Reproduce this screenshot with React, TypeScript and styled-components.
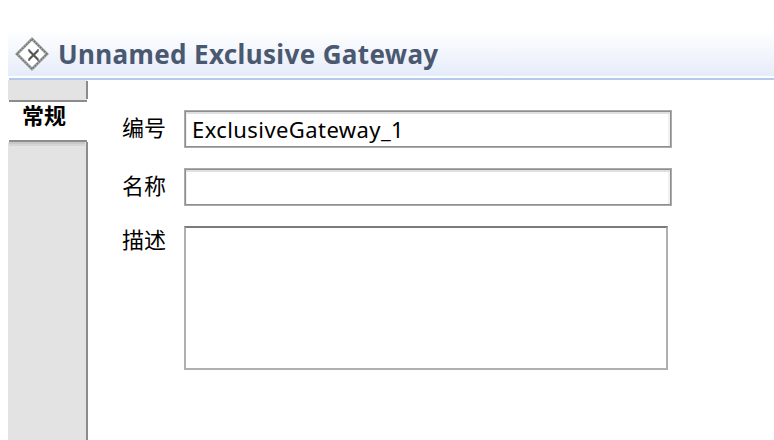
import React from "react";
import styled, { createGlobalStyle } from "styled-components";

const GlobalStyle = createGlobalStyle`
  * { box-sizing: border-box; }
  body { margin: 0; background: #fff; overflow: hidden; }
`;

const Page = styled.div`
  height: 440px;
  padding: 30px 0 0 8px;
  display: flex;
  flex-direction: column;
  font-family: "Noto Sans", "Noto Sans CJK SC", sans-serif;
  color: #000;
`;

const Header = styled.header`
  height: 46px;
  flex: none;
  display: flex;
  align-items: center;
  padding: 2px 0 0 7px;
  background: linear-gradient(#ffffff, #e5ecfa);
`;

const Title = styled.h1`
  margin: 0 0 0 8px;
  font-size: 26px;
  line-height: 36px;
  font-weight: 700;
  letter-spacing: 0.36px;
  white-space: nowrap;
  color: #4a5870;
`;

const Rule = styled.div`
  height: 2px;
  flex: none;
  margin: 2px 0 0 1px;
  background: #b4c9ed;
`;

const Body = styled.div`
  flex: 1;
  display: flex;
`;

const Sidebar = styled.nav`
  width: 80px;
  display: flex;
  flex-direction: column;
`;

const TabGap = styled.div`
  height: 20px;
  background: linear-gradient(#8c8c8c, #8c8c8c) 78px 1px / 2px 18px no-repeat,
    linear-gradient(90deg, #e3e3e3 79px, #fff 79px);
`;

const Tab = styled.div`
  height: 42px;
  margin: 0 1px;
  border: solid #8c8c8c;
  border-width: 2px 0;
  padding-left: 13px;
  font-size: 22px;
  line-height: 26px;
  font-weight: 700;
`;

const TabRest = styled.div`
  flex: 1;
  border-right: 2px solid #8c8c8c;
  background: linear-gradient(#c8c8c8 2px, #d5d5d5 2px 4px, #e3e3e3 4px) 1px 0 / 76px 6px no-repeat, #e3e3e3;
`;

const Form = styled.form`
  padding: 30px 0 0 34px;
  display: grid;
  grid-template-columns: 62px 488px;
  grid-template-rows: 38px 38px 144px;
  row-gap: 20px;
`;

const Label = styled.label<{ $top: number }>`
  margin-top: ${(p) => p.$top}px;
  font-size: 22px;
  line-height: 32px;
  white-space: nowrap;
`;

const Input = styled.input`
  width: 488px;
  height: 38px;
  margin: 0;
  padding: 0 7px;
  border: 1px solid #ababab;
  border-radius: 0;
  outline: none;
  background: #fff;
  box-shadow: inset 0 0 0 1px #8e8e8e, inset 0 3px 0 #e0e0e0, inset 2px 0 0 #f1f1f1, inset -3px 0 0 #f1f1f1;
  font: 22px/32px "Noto Sans", sans-serif;
  letter-spacing: 0.42px;
  color: #000;
`;

const TextArea = styled.textarea`
  width: 484px;
  height: 144px;
  margin: 0;
  padding: 6px;
  border: 2px solid #b0b0b0;
  border-top-color: #7c7a7c;
  border-radius: 0;
  outline: none;
  resize: none;
  background: #fff;
  font: 22px "Noto Sans", sans-serif;
`;

const GatewayIcon = () => (
  <svg width="35" height="36" viewBox="0 0 35 36" fill="none">
    <path d="M17 3 32 18 17 33 2 18Z" fill="#fff" stroke="#a6a6a6" strokeWidth="2.8" />
    <path d="M17 3 32 18 17 33 2 18Z" stroke="#747474" strokeWidth="1.8" strokeDasharray="1.6 1.23" />
    <path d="m14 14.5 9 9M23 14.5l-9 9" stroke="#555" strokeWidth="2.2" />
    <path d="M13 14h2m7 0h2M13 24h2m7 0h2" stroke="#666" strokeWidth="1.6" />
  </svg>
);

export default function App() {
  return (
    <>
      <GlobalStyle />
      <Page>
        <Header>
          <GatewayIcon />
          <Title>Unnamed Exclusive Gateway</Title>
        </Header>
        <Rule />
        <Body>
          <Sidebar>
            <TabGap />
            <Tab>常规</Tab>
            <TabRest />
          </Sidebar>
          <Form>
            <Label htmlFor="id" $top={1}>编号</Label>
            <Input id="id" defaultValue="ExclusiveGateway_1" spellCheck={false} />
            <Label htmlFor="name" $top={1}>名称</Label>
            <Input id="name" />
            <Label htmlFor="description" $top={-3}>描述</Label>
            <TextArea id="description" />
          </Form>
        </Body>
      </Page>
    </>
  );
}
